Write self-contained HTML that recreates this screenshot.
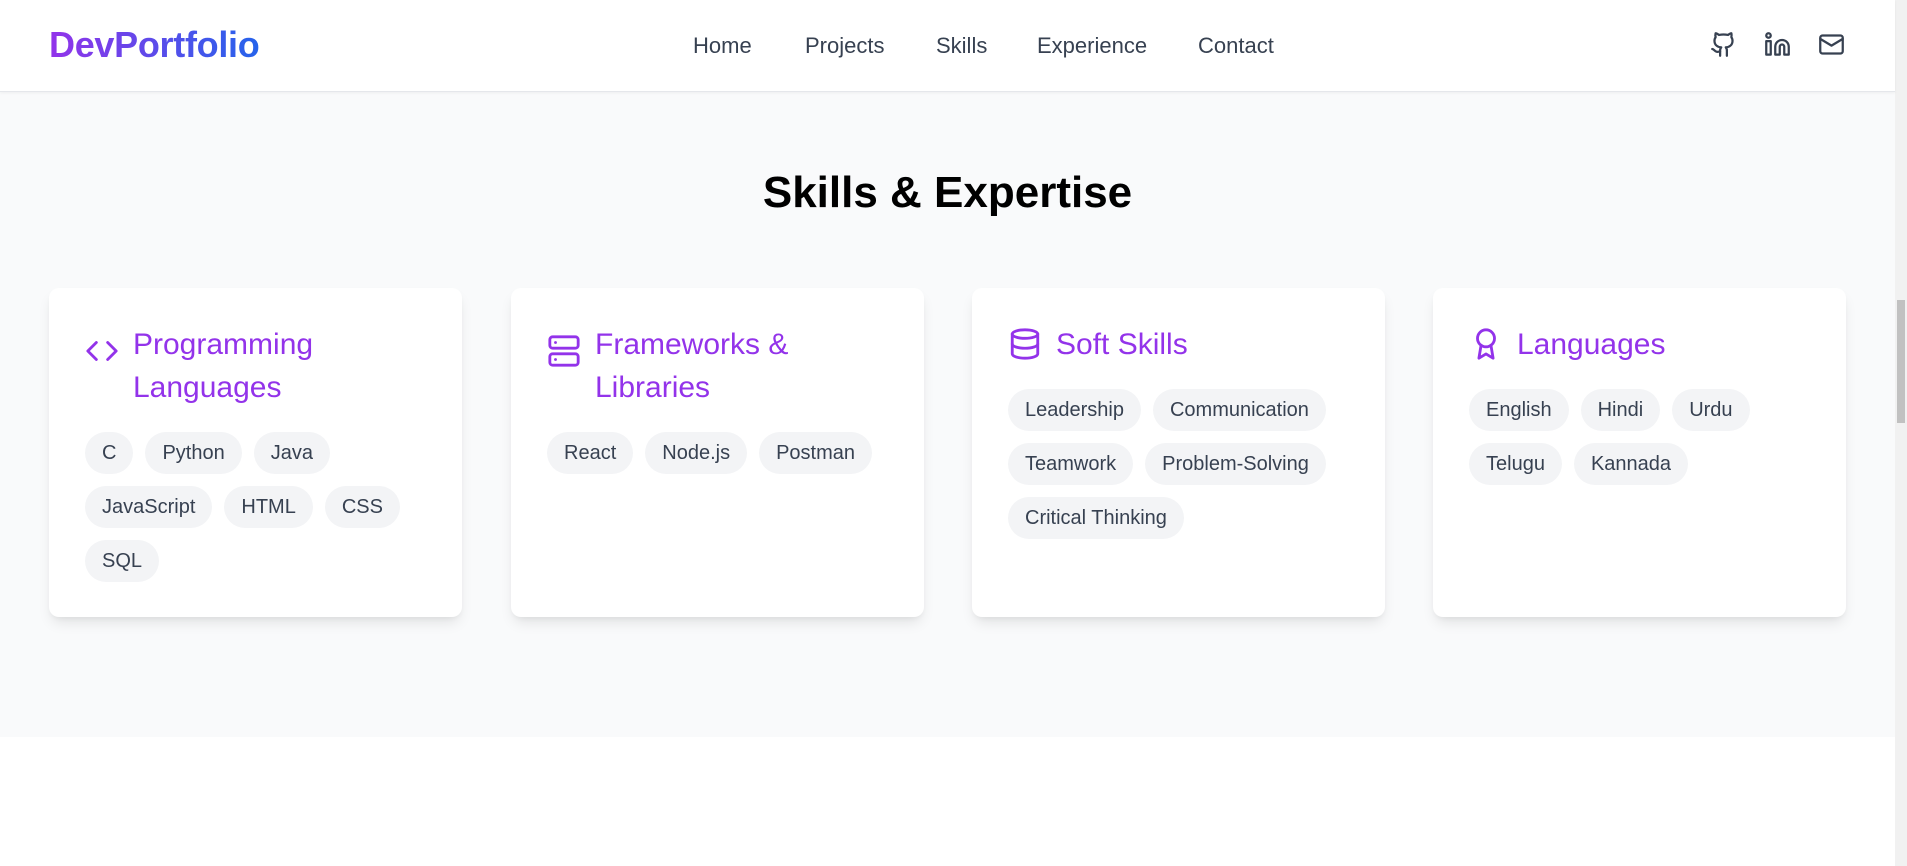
<!DOCTYPE html>
<html><head><meta charset="utf-8"><style>
*{box-sizing:border-box;margin:0;padding:0}
body{width:1907px;height:866px;overflow:hidden;background:#fff;font-family:"Liberation Sans","DejaVu Sans",sans-serif;position:relative}
header{position:absolute;left:0;top:0;width:1895px;height:92px;background:#fff;border-bottom:1px solid #e5e7eb;box-shadow:0 1px 3px rgba(0,0,0,.05);z-index:2}
.logo{position:absolute;left:49px;top:24px;font-size:36px;font-weight:bold;background:linear-gradient(90deg,#9333ea,#2563eb);-webkit-background-clip:text;background-clip:text;color:transparent;letter-spacing:-0.3px}
nav{position:absolute;top:33px;left:693px;font-size:22px;color:#374151}
nav span{position:absolute;white-space:nowrap}
.icons svg{position:absolute;top:31px;width:27px;height:27px;fill:none;stroke:#374151;stroke-width:2;stroke-linecap:round;stroke-linejoin:round}
section{position:absolute;left:0;top:92px;width:1895px;height:645px;background:#f9fafb}
h2{position:absolute;top:168px;left:0;width:1895px;text-align:center;font-size:44px;font-weight:bold;color:#000}
.card{position:absolute;top:288px;width:413px;height:329px;background:#fff;border-radius:10px;box-shadow:0 8px 14px -3px rgba(0,0,0,.1),0 3px 6px -2px rgba(0,0,0,.05);padding:0 36px}
.card svg{position:absolute;left:36px;width:34px;height:34px;fill:none;stroke:#9333ea;stroke-width:2;stroke-linecap:round;stroke-linejoin:round}
.title{position:absolute;left:84px;top:35px;font-size:30px;line-height:43px;color:#9333ea;width:260px}
.tags{position:absolute;left:36px;top:144px;width:350px;display:flex;flex-wrap:wrap;gap:12px}
.tags span{height:42px;line-height:42px;padding:0 17px;background:#f3f4f6;border-radius:21px;font-size:20px;color:#374151}
.sb{position:absolute;right:0;top:0;width:12px;height:866px;background:#f1f1f1}
.sb div{position:absolute;left:2px;top:300px;width:8px;height:123px;background:#c1c1c1}
</style></head><body>
<header>
<div class="logo">DevPortfolio</div>
<nav>
<span style="left:0">Home</span>
<span style="left:112px">Projects</span>
<span style="left:243px">Skills</span>
<span style="left:344px">Experience</span>
<span style="left:505px">Contact</span>
</nav>
<div class="icons">
<svg style="left:1710px" viewBox="0 0 24 24"><path d="M15 22v-4a4.8 4.8 0 0 0-1-3.5c3 0 6-2 6-5.5.08-1.25-.27-2.48-1-3.5.28-1.150.28-2.35 0-3.5 0 0-1 0-3 1.5-2.64-.5-5.36-.5-8 0C6 2 5 2 5 2c-.3 1.15-.3 2.35 0 3.5A5.4 5.4 0 0 0 4 9c0 3.5 3 5.5 6 5.5-.39.49-.68 1.05-.85 1.65S8.93 17.38 9 18v4"/><path d="M9 18c-4.51 2-5-2-7-2"/></svg>
<svg style="left:1764px" viewBox="0 0 24 24"><path d="M16 8a6 6 0 0 1 6 6v7h-4v-7a2 2 0 0 0-4 0v7h-4v-7a6 6 0 0 1 6-6z"/><rect x="2" y="9" width="4" height="12"/><circle cx="4" cy="4" r="2"/></svg>
<svg style="left:1818px" viewBox="0 0 24 24"><rect x="2" y="4" width="20" height="16" rx="2"/><path d="m22 7-10 6L2 7"/></svg>
</div>
</header>
<section></section>
<h2>Skills &amp; Expertise</h2>

<div class="card" style="left:49px">
<svg style="top:46px" viewBox="0 0 24 24"><path d="m16 18 6-6-6-6M8 6l-6 6 6 6"/></svg>
<div class="title">Programming Languages</div>
<div class="tags"><span>C</span><span>Python</span><span>Java</span><span>JavaScript</span><span>HTML</span><span>CSS</span><span>SQL</span></div>
</div>

<div class="card" style="left:511px">
<svg style="top:46px" viewBox="0 0 24 24"><rect x="2" y="2" width="20" height="8" rx="2"/><rect x="2" y="14" width="20" height="8" rx="2"/><path d="M6 6h.01M6 18h.01"/></svg>
<div class="title">Frameworks &amp; Libraries</div>
<div class="tags"><span>React</span><span>Node.js</span><span>Postman</span></div>
</div>

<div class="card" style="left:972px">
<svg style="top:39px" viewBox="0 0 24 24"><ellipse cx="12" cy="5" rx="9" ry="3"/><path d="M3 5v14a9 3 0 0 0 18 0V5"/><path d="M3 12a9 3 0 0 0 18 0"/></svg>
<div class="title">Soft Skills</div>
<div class="tags" style="top:101px"><span>Leadership</span><span>Communication</span><span>Teamwork</span><span>Problem-Solving</span><span>Critical Thinking</span></div>
</div>

<div class="card" style="left:1433px">
<svg style="top:39px" viewBox="0 0 24 24"><circle cx="12" cy="8" r="6"/><path d="M15.477 12.89 17 22l-5-3-5 3 1.523-9.11"/></svg>
<div class="title">Languages</div>
<div class="tags" style="top:101px"><span>English</span><span>Hindi</span><span>Urdu</span><span>Telugu</span><span>Kannada</span></div>
</div>

<div class="sb"><div></div></div>
</body></html>
